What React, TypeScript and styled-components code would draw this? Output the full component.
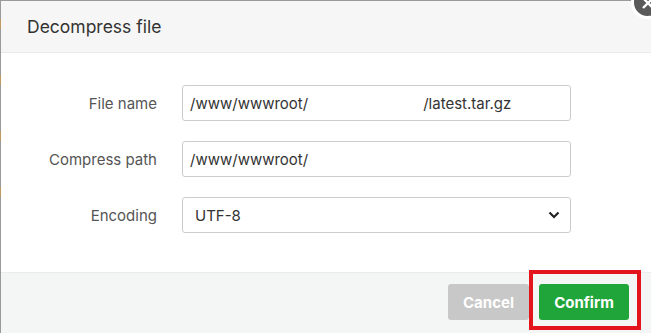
import React from 'react'
import styled, { createGlobalStyle } from 'styled-components'

const GlobalStyle = createGlobalStyle`
  html, body {
    margin: 0;
    padding: 0;
    width: 651px;
    height: 333px;
    overflow: hidden;
    background: #fff;
  }
  * {
    box-sizing: border-box;
  }
`

// the page behind the dialog only shows as a 1px strip on the left
const Backdrop = styled.div`
  width: 651px;
  height: 333px;
  padding: 1px 0 0 1px;
  background:
    linear-gradient(
      to bottom,
      #9a9a9a 0, #9a9a9a 19px,
      #c59a62 19px, #c59a62 29px,
      #9a9a9a 29px, #9a9a9a 75px,
      #c59a62 75px, #c59a62 85px,
      #9a9a9a 85px, #9a9a9a 131px,
      #c59a62 131px, #c59a62 141px,
      #9a9a9a 141px, #9a9a9a 187px,
      #c59a62 187px, #c59a62 197px,
      #9a9a9a 197px, #9a9a9a 100%
    );
  position: relative;
  font-family: Inter, "Noto Sans", sans-serif;
`

const Dialog = styled.div`
  width: 100%;
  height: 100%;
  background: #fff;
  display: flex;
  flex-direction: column;
`

const Header = styled.div`
  height: 52px;
  background: #f6f6f6;
  border-bottom: 1px solid #eaeaea;
  display: flex;
  align-items: center;
  padding-left: 26px;
  font-size: 17.5px;
  color: #333;
`

const CloseButton = styled.div`
  position: absolute;
  left: 631px;
  top: -14px;
  width: 33px;
  height: 33px;
  border-radius: 50%;
  background: #5a5a5a;
  border: 3px solid #fff;
  display: flex;
  align-items: center;
  justify-content: center;
`

const Body = styled.div`
  flex: 1;
  padding: 32px 80px 0 0;
  display: flex;
  flex-direction: column;
  gap: 20px;
`

const Row = styled.div`
  display: flex;
  align-items: center;
  gap: 25px;
`

const Label = styled.div`
  width: 156px;
  text-align: right;
  font-size: 15px;
  color: #555;
`

const Field = styled.div<{ $indent?: number }>`
  flex: 1;
  height: 36px;
  border: 1px solid #ccc;
  border-radius: 3px;
  display: flex;
  align-items: center;
  padding: 0 10px 0 ${p => p.$indent ?? 7}px;
  font-size: 15px;
  color: #333;
  background: #fff;
`

const Gap = styled.span<{ $w: number }>`
  display: inline-block;
  width: ${p => p.$w}px;
`

const Chevron = styled.svg`
  margin-left: auto;
`

const Footer = styled.div`
  height: 61px;
  background: #f4f5f5;
  border-top: 1px solid #ebebeb;
  display: flex;
  justify-content: flex-end;
  align-items: center;
  gap: 10px;
  padding-right: 22px;
  padding-bottom: 2px;
`

const Button = styled.div<{ $primary?: boolean; $w: number }>`
  width: ${p => p.$w}px;
  height: 36px;
  border-radius: 3px;
  background: ${p => (p.$primary ? '#20a53a' : '#c8c8c8')};
  color: #fff;
  font-weight: 700;
  font-size: 15px;
  display: flex;
  align-items: center;
  justify-content: center;
  position: relative;
`

const Highlight = styled.div`
  position: absolute;
  left: -10px;
  top: -14px;
  right: -12px;
  bottom: -10px;
  border: 4px solid #e3141c;
  pointer-events: none;
`

export default function App() {
  return (
    <>
      <GlobalStyle />
      <Backdrop>
        <Dialog>
          <Header>Decompress file</Header>
          <Body>
            <Row>
              <Label>File name</Label>
              <Field>
                /www/wwwroot/<Gap $w={115} />/latest.tar.gz
              </Field>
            </Row>
            <Row>
              <Label>Compress path</Label>
              <Field>/www/wwwroot/</Field>
            </Row>
            <Row>
              <Label>Encoding</Label>
              <Field $indent={12}>
                UTF-8
                <Chevron width="12" height="8" viewBox="0 0 12 8">
                  <path d="M1.5 1.5 L6 6 L10.5 1.5" fill="none" stroke="#222" strokeWidth="2.2" />
                </Chevron>
              </Field>
            </Row>
          </Body>
          <Footer>
            <Button $w={81}>Cancel</Button>
            <Button $primary $w={90}>
              Confirm
              <Highlight />
            </Button>
          </Footer>
        </Dialog>
        <CloseButton>
          <svg width="14" height="14" viewBox="0 0 14 14">
            <path d="M2 2 L12 12 M12 2 L2 12" stroke="#fff" strokeWidth="2.4" />
          </svg>
        </CloseButton>
      </Backdrop>
    </>
  )
}
